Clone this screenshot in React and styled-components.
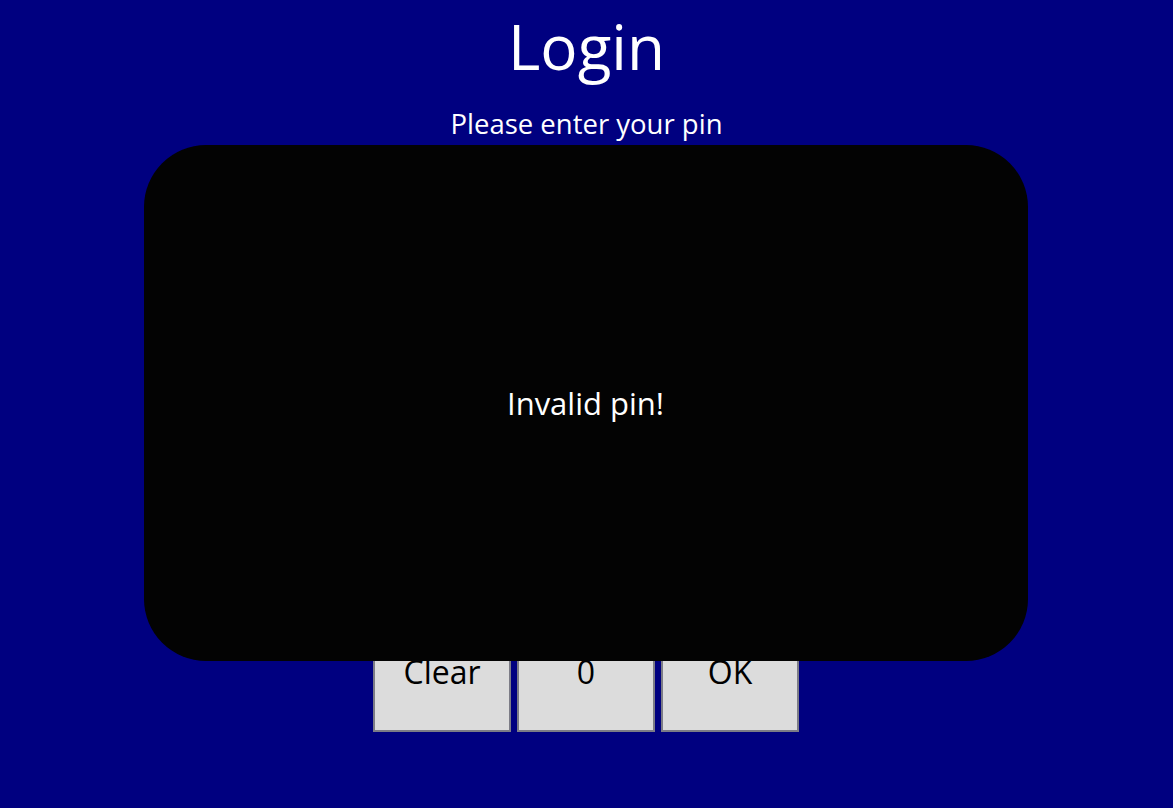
import React, { useState } from "react"
import styled, { createGlobalStyle } from "styled-components"

const GlobalStyle = createGlobalStyle`
  html, body {
    margin: 0;
    padding: 0;
    background: #000080;
    font-family: "Open Sans", "Noto Sans", sans-serif;
  }
`

const Page = styled.div`
  position: relative;
  min-height: 808px;
  display: flex;
  flex-direction: column;
  align-items: center;
  color: #fff;
`

const Title = styled.h1`
  margin: 4px 0 0;
  font-size: 62px;
  font-weight: 400;
  line-height: 84px;
`

const Subtitle = styled.p`
  margin: 17px 0 0;
  font-size: 27.5px;
  line-height: 38px;
`

const PinField = styled.div`
  margin-top: 11px;
  width: 426px;
  height: 56px;
  background: #fff;
  border: 2px solid #808080;
  box-sizing: border-box;
`

const Keypad = styled.div`
  margin: 16px 1px 0 0;
  display: grid;
  grid-template-columns: repeat(3, 138px);
  grid-auto-rows: 122px;
  gap: 6px;
`

const Key = styled.button`
  box-sizing: border-box;
  background: #dcdcdc;
  border: 2px solid #7c7c86;
  color: #000;
  font-family: inherit;
  font-size: 32px;
  padding: 0;
  cursor: pointer;
`

const Overlay = styled.div`
  position: absolute;
  top: 145px;
  left: calc(50% - 443px);
  width: 884px;
  height: 516px;
  border-radius: 62px;
  background: #030303;
  display: flex;
  align-items: center;
  justify-content: center;
  font-size: 31px;
  color: #fff;
`

const keys = ["1", "2", "3", "4", "5", "6", "7", "8", "9", "Clear", "0", "OK"]

const App = () => {
  const [pin, setPin] = useState("")

  const press = (k) => {
    if (k === "Clear") setPin("")
    else if (k !== "OK") setPin(pin + k)
  }

  return (
    <Page>
      <GlobalStyle />
      <Title>Login</Title>
      <Subtitle>Please enter your pin</Subtitle>
      <PinField>{pin.replace(/./g, "*")}</PinField>
      <Keypad>
        {keys.map((k) => (
          <Key key={k} onClick={() => press(k)}>
            {k}
          </Key>
        ))}
      </Keypad>
      <Overlay>Invalid pin!</Overlay>
    </Page>
  )
}

export default App
